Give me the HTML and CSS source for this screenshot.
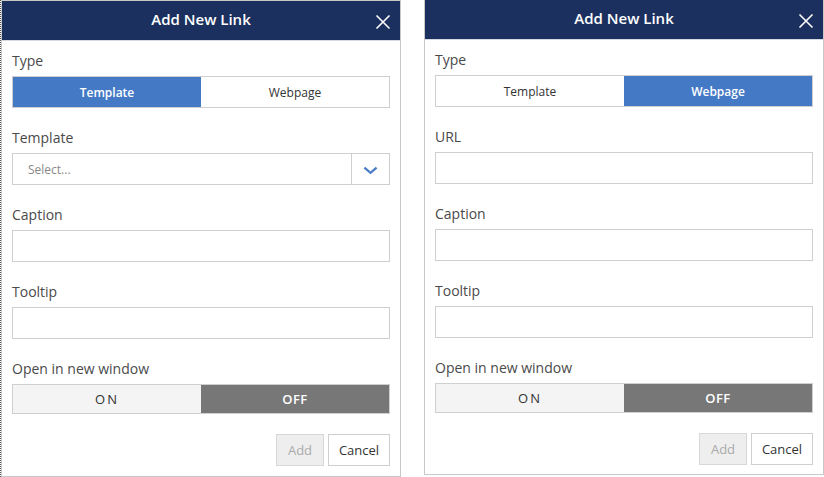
FILE: index.html
```html
<!DOCTYPE html>
<html>
<head>
<meta charset="utf-8">
<link rel="stylesheet" href="styles.css">
</head>
<body>
<div class="stage">
  <div class="dialog">
    <div class="header">
      <span class="title">Add New Link</span>
      <svg class="close" viewBox="0 0 16 16" width="16" height="16"><path d="M1.5 1.5 L14.5 14.5 M14.5 1.5 L1.5 14.5" stroke="#fff" stroke-width="1.6" fill="none"/></svg>
    </div>
    <div class="body">
      <div class="label">Type</div>
      <div class="seg">
        <div class="seg-item active">Template</div>
        <div class="seg-item">Webpage</div>
      </div>
      <div class="label">Template</div>
      <div class="select">
        <div class="select-text">Select...</div>
        <div class="select-btn"><svg viewBox="0 0 16 9" width="15" height="9"><path d="M1.5 1.5 L8 7 L14.5 1.5" stroke="#4a7cc6" stroke-width="2.4" fill="none"/></svg></div>
      </div>
      <div class="label">Caption</div>
      <div class="input"></div>
      <div class="label">Tooltip</div>
      <div class="input"></div>
      <div class="label">Open in new window</div>
      <div class="toggle">
        <div class="tog-on">ON</div>
        <div class="tog-off">OFF</div>
      </div>
      <div class="actions">
        <div class="btn disabled">Add</div>
        <div class="btn cancel">Cancel</div>
      </div>
    </div>
  </div>
  <div class="dialog second">
    <div class="header">
      <span class="title">Add New Link</span>
      <svg class="close" viewBox="0 0 16 16" width="16" height="16"><path d="M1.5 1.5 L14.5 14.5 M14.5 1.5 L1.5 14.5" stroke="#fff" stroke-width="1.6" fill="none"/></svg>
    </div>
    <div class="body">
      <div class="label">Type</div>
      <div class="seg">
        <div class="seg-item">Template</div>
        <div class="seg-item active">Webpage</div>
      </div>
      <div class="label">URL</div>
      <div class="input"></div>
      <div class="label">Caption</div>
      <div class="input"></div>
      <div class="label">Tooltip</div>
      <div class="input"></div>
      <div class="label">Open in new window</div>
      <div class="toggle">
        <div class="tog-on">ON</div>
        <div class="tog-off">OFF</div>
      </div>
      <div class="actions">
        <div class="btn disabled">Add</div>
        <div class="btn cancel">Cancel</div>
      </div>
    </div>
  </div>
</div>
</body>
</html>
```
FILE: styles.css
```css
html, body {
  margin: 0;
  padding: 0;
  background: #fff;
}
body {
  font-family: "Open Sans", "Noto Sans", sans-serif;
  color: #333;
  width: 824px;
  height: 477px;
  overflow: hidden;
}
.stage {
  display: flex;
  align-items: flex-start;
  gap: 23px;
  border-left: 1px dotted #555;
  height: 477px;
  box-sizing: border-box;
}
.dialog {
  width: 400px;
  height: 477px;
  box-sizing: border-box;
  border: 1px solid #c8c8c8;
  background: #fff;
  display: flex;
  flex-direction: column;
}
.dialog.second {
  margin-top: -1px;
  height: 476px;
}
.header {
  height: 39px;
  flex: none;
  background: #1b305e;
  border-bottom: 1px solid #d5d9e0;
  display: flex;
  align-items: center;
  justify-content: center;
  position: relative;
}
.title {
  color: #fff;
  font-size: 15px;
  font-weight: 600;
  line-height: 20px;
  margin-top: -4px;
}
.close {
  position: absolute;
  right: 9px;
  top: 13px;
}
.body {
  padding: 10px 10px 10px;
  display: flex;
  flex-direction: column;
}
.label {
  font-size: 14px;
  line-height: 20px;
  height: 20px;
  color: #4a4a4a;
  margin-bottom: 5px;
}
.seg {
  display: flex;
  height: 32px;
  box-sizing: border-box;
  border: 1px solid #cfcfcf;
  margin-bottom: 20px;
}
.seg-item {
  flex: 1;
  display: flex;
  align-items: center;
  justify-content: center;
  font-size: 12px;
  color: #333;
  background: #fff;
}
.seg-item.active {
  background: #4479c6;
  color: #fff;
  font-weight: 600;
}
.select {
  height: 32px;
  box-sizing: border-box;
  border: 1px solid #cfcfcf;
  display: flex;
  margin-bottom: 20px;
}
.select-text {
  flex: 1;
  font-size: 12px;
  color: #888;
  padding-left: 15px;
  display: flex;
  align-items: center;
}
.select-btn {
  width: 38px;
  border-left: 1px solid #cfcfcf;
  display: flex;
  align-items: center;
  justify-content: center;
  padding-top: 2px;
  box-sizing: border-box;
}
.input {
  height: 32px;
  box-sizing: border-box;
  border: 1px solid #cfcfcf;
  background: #fff;
  margin-bottom: 20px;
}
.toggle {
  height: 30px;
  box-sizing: border-box;
  border: 1px solid #cfcfcf;
  display: flex;
  margin-bottom: 20px;
}
.tog-on, .tog-off {
  flex: 1;
  display: flex;
  align-items: center;
  justify-content: center;
  font-size: 13px;
}
.tog-on {
  background: #f4f4f4;
  color: #333;
  letter-spacing: 2px;
}
.tog-off {
  background: #777;
  color: #fff;
  font-weight: 600;
  letter-spacing: 0.5px;
}
.actions {
  display: flex;
  justify-content: flex-end;
  gap: 4px;
}
.btn {
  height: 32px;
  box-sizing: border-box;
  border: 1px solid #cfcfcf;
  display: flex;
  align-items: center;
  justify-content: center;
  font-size: 13px;
}
.btn.disabled {
  width: 48px;
  background: #eee;
  color: #aaa;
  border-color: #d8d8d8;
}
.btn.cancel {
  width: 62px;
  background: #fff;
  color: #333;
}
```
